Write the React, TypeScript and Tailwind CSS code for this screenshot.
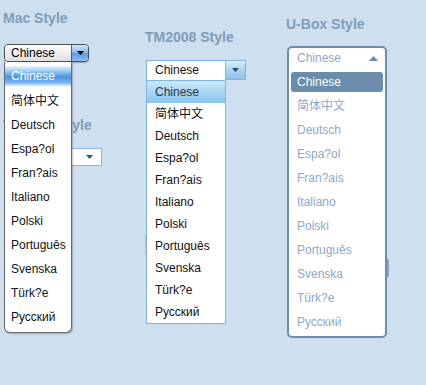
import React from "react";

const langs = [
  "Chinese",
  "简体中文",
  "Deutsch",
  "Espa?ol",
  "Fran?ais",
  "Italiano",
  "Polski",
  "Português",
  "Svenska",
  "Türk?e",
  "Русский",
];

const font = {
  fontFamily: '"Liberation Sans", Arial, "Noto Sans CJK SC", sans-serif',
};

function Heading({ children, className = "" }: { children: React.ReactNode; className?: string }) {
  return (
    <div className={"text-[14px] leading-[16px] font-bold text-[#7f9dba] whitespace-nowrap " + className}>
      {children}
    </div>
  );
}

function MacSelect() {
  return (
    <div className="relative ml-[1px] mt-[18px] w-[85px] h-[18px]">
      <div className="flex h-full rounded-[4px] border border-[#4f4f4f] overflow-hidden shadow-[0_1px_1px_rgba(0,0,0,0.25)]">
        <div className="flex-1 bg-gradient-to-b from-white to-[#dedede] text-[12px] leading-[16px] pl-[6px] text-black">
          Chinese
        </div>
        <div className="w-[17px] border-l border-[#3565a8] bg-[linear-gradient(to_bottom,#d3e6fb_0%,#8dbcf0_45%,#5c98e2_55%,#8cc0f4_100%)] flex items-center justify-center">
          <svg width="7" height="4" viewBox="0 0 7 4">
            <polygon points="0,0 7,0 3.5,4" fill="#000" />
          </svg>
        </div>
      </div>
      <div className="absolute left-0 top-full z-10 w-[68px] bg-white border-x border-b border-[#6a6a6a] rounded-b-[6px] pt-[3px] pb-[3px] shadow-[1px_1px_2px_rgba(0,0,0,0.25)]">
        {langs.map((l, i) =>
          i === 0 ? (
            <div key={l} className="h-[24px] pt-[1px]">
              <div className="h-[20px] leading-[20px] pl-[6px] text-[12px] text-white bg-[linear-gradient(to_bottom,#eef6fe_0%,#8fc2f3_30%,#4a92e4_55%,#79b5f1_82%,#d5e8fb_100%)]">
                {l}
              </div>
            </div>
          ) : (
            <div key={l} className="h-[24px] leading-[24px] pl-[6px] text-[12px] text-[#111]">
              {l}
            </div>
          )
        )}
      </div>
    </div>
  );
}

function PlainSelect() {
  return (
    <div className="mt-[15px] ml-[1px] w-[98px] h-[18px] border border-[#8ab8e4] bg-white flex items-center justify-end pr-[8px]">
      <svg width="7" height="4" viewBox="0 0 7 4">
        <polygon points="0,0 7,0 3.5,4" fill="#235e6e" />
      </svg>
    </div>
  );
}

function TMSelect() {
  return (
    <div className="relative ml-[1px] mt-[15px] flex h-[21px]">
      <div className="w-[80px] h-[21px] border border-[#80b3e0] bg-white text-[12px] leading-[19px] pl-[8px] text-[#111]">
        Chinese
      </div>
      <div className="w-[20px] h-[20px] border border-l-0 border-[#80b3e0] bg-[linear-gradient(to_bottom,#dbeefb_0%,#a9d4f2_50%,#8cc4ea_100%)] flex items-center justify-center">
        <svg width="7" height="4" viewBox="0 0 7 4">
          <polygon points="0,0 7,0 3.5,4" fill="#1f4d6e" />
        </svg>
      </div>
      <div className="absolute left-0 top-[21px] z-10 w-[80px] bg-white border-x border-b border-[#80b3e0]">
        {langs.map((l, i) =>
          i === 0 ? (
            <div
              key={l}
              className="h-[22px] leading-[22px] pl-[8px] text-[12px] text-[#2a3645] bg-[linear-gradient(to_bottom,#cbe8fa_0%,#a8d6f4_50%,#86c3eb_100%)]"
            >
              {l}
            </div>
          ) : (
            <div key={l} className="h-[22px] leading-[22px] pl-[8px] text-[12px] text-[#111]">
              {l}
            </div>
          )
        )}
      </div>
    </div>
  );
}

function UBoxSelect() {
  return (
    <div className="relative ml-[1px] mt-[14px] w-[100px] h-[24px]">
      <div className="absolute left-0 top-0 z-10 w-[100px] bg-white border-2 border-[#6e8eab] rounded-[5px] pb-[2px]">
        <div className="h-[22px] pt-[1px] flex items-start justify-between pl-[8px] pr-[7px]">
          <span className="text-[12px] leading-[18px] text-[#8ea8c4]">Chinese</span>
          <svg width="9" height="5" viewBox="0 0 9 5" className="mt-[7px]">
            <polygon points="0,5 9,5 4.5,0" fill="#6b8aa6" />
          </svg>
        </div>
        {langs.map((l, i) =>
          i === 0 ? (
            <div key={l} className="h-[24px] py-[2px] px-[2px]">
              <div className="h-[20px] leading-[20px] pl-[6px] rounded-[3px] bg-[#6b8dab] text-[12px] text-white">
                {l}
              </div>
            </div>
          ) : (
            <div key={l} className="h-[24px] leading-[24px] pl-[8px] text-[12px] text-[#8ea8c4]">
              {l}
            </div>
          )
        )}
      </div>
    </div>
  );
}

export default function App() {
  return (
    <div className="relative w-[426px] h-[385px] bg-[#cedfef] overflow-hidden" style={font}>
      <div className="flex items-start">
        <div className="ml-[3px] w-[142px] pt-[10px] flex flex-col items-start">
          <Heading>Mac Style</Heading>
          <MacSelect />
          <Heading className="mt-[55px]">TM2008 Style</Heading>
          <PlainSelect />
        </div>
        <div className="w-[141px] pt-[29px] flex flex-col items-start">
          <Heading>TM2008 Style</Heading>
          <TMSelect />
          <div className="mt-[154px] w-[80px] h-[20px] border border-[#9cc5ea] bg-[#f4f9fe]" />
        </div>
        <div className="w-[140px] pt-[16px] flex flex-col items-start">
          <Heading>U-Box Style</Heading>
          <UBoxSelect />
          <div className="mt-[188px] ml-[2px] w-[101px] h-[20px] border-2 border-[#78a5d6] rounded-[4px] bg-white" />
        </div>
      </div>
    </div>
  );
}
